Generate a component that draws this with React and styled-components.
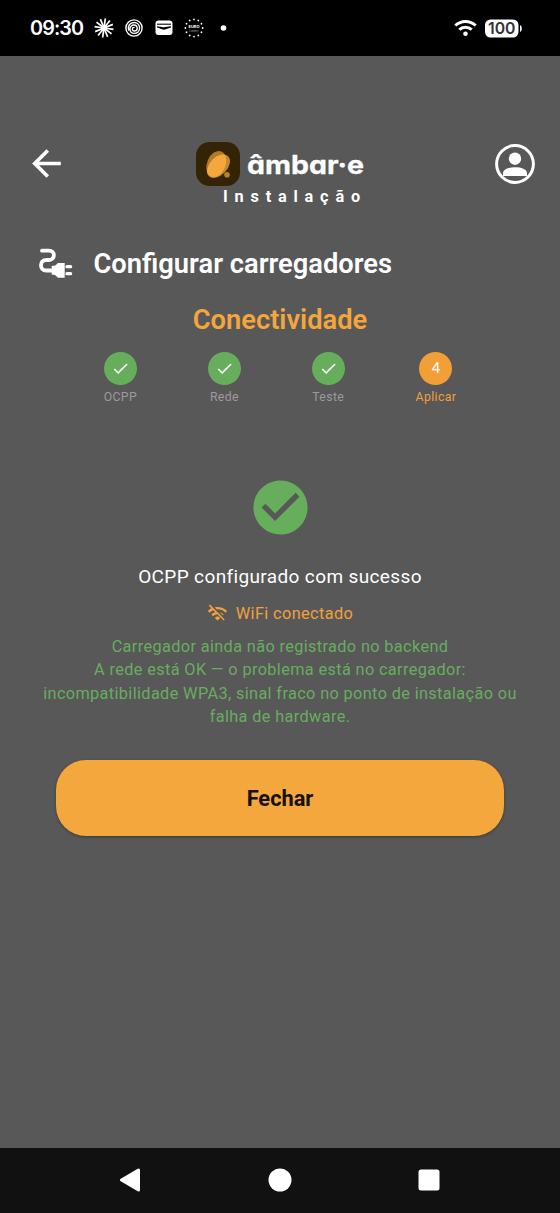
import React from 'react';
import styled, { createGlobalStyle } from 'styled-components';
import { MdArrowBack, MdCheck, MdCheckCircle, MdWifiOff } from 'react-icons/md';

const GlobalStyle = createGlobalStyle`
  * {
    box-sizing: border-box;
  }

  body {
    margin: 0;
    background: #585858;
    font-family: Roboto, "Liberation Sans", sans-serif;
  }

  svg {
    display: block;
    flex: none;
  }
`

const Screen = styled.div`
  display: flex;
  flex-direction: column;
  width: 560px;
  height: 1213px;
  background: #585858;
  color: #fff;
`

const StatusBar = styled.div`
  display: flex;
  align-items: center;
  justify-content: space-between;
  height: 56px;
  padding: 0 38px 0 30px;
  background: #000;
`

const StatusGroup = styled.div`
  display: flex;
  align-items: center;
  gap: ${props => props.$gap}px;
`

const Clock = styled.span`
  width: 54px;
  font-family: Inter, Roboto, sans-serif;
  font-size: 19.8px;
  font-weight: 600;
  letter-spacing: -0.9px;
  white-space: nowrap;
`

const Header = styled.header`
  display: flex;
  justify-content: space-between;
  height: 152px;
  padding: 86px 25px 0 25px;
`

const IconButton = styled.button`
  display: flex;
  align-items: flex-end;
  height: ${props => props.$height}px;
  padding: 0;
  border: none;
  background: none;
  color: #fff;
`

const Brand = styled.div`
  display: flex;
  flex-direction: column;
  width: 170px;
  margin-right: 1px;
`

const BrandSub = styled.div`
  padding-left: 27px;
  font-size: 16.3px;
  line-height: 21px;
  font-weight: 700;
  letter-spacing: 6.8px;
  white-space: nowrap;
`

const TitleRow = styled.div`
  display: flex;
  align-items: center;
  gap: 20.5px;
  height: 56px;
  margin-top: 27px;
  padding-left: 38px;
`

const Title = styled.h1`
  margin: 0;
  padding-top: 1px;
  font-size: 27.3px;
  font-weight: 600;
  line-height: 32px;
  white-space: nowrap;
`

const Subtitle = styled.h2`
  margin: 13px 0 16px;
  color: #f2a63b;
  font-size: 27.3px;
  font-weight: 600;
  line-height: 32px;
  text-align: center;
`

const Steps = styled.div`
  display: flex;
  justify-content: center;
  gap: 70.8px;
`

const Step = styled.div`
  display: flex;
  flex-direction: column;
  align-items: center;
  gap: 4px;
  color: ${props => props.$active ? '#f29f38' : '#9b9b9b'};
  font-size: 12.25px;
  line-height: 17px;
  letter-spacing: 0.4px;
`

const StepDot = styled.div`
  display: flex;
  align-items: center;
  justify-content: center;
  width: 33px;
  height: 33px;
  border-radius: 50%;
  background: ${props => props.$active ? '#f29f38' : '#66ae5b'};
  color: #fff;
  font-size: 15px;
  letter-spacing: 0;
`

const Result = styled.div`
  display: flex;
  flex-direction: column;
  align-items: center;
  padding-top: 69px;
`

const ResultTitle = styled.p`
  margin: 23px 0 0;
  font-size: 19px;
  line-height: 27px;
  letter-spacing: 0.37px;
`

const WifiRow = styled.div`
  display: flex;
  align-items: center;
  gap: 8px;
  height: 24px;
  margin-top: 11px;
  color: #f2a03c;
  font-size: 16.3px;
  letter-spacing: 0.4px;
`

const Message = styled.p`
  margin: 10px 0 0;
  color: #68ad5f;
  font-size: 16.3px;
  line-height: 23.3px;
  letter-spacing: 0.37px;
  text-align: center;
  white-space: pre-line;
`

const CloseButton = styled.button`
  width: 448px;
  height: 76px;
  margin: 32px auto 0;
  border: none;
  border-radius: 30px;
  background: #f3a73c;
  box-shadow: 0 1px 3px rgba(0, 0, 0, 0.35);
  color: #151005;
  font-family: inherit;
  font-size: 21.8px;
  font-weight: 700;
`

const NavBar = styled.nav`
  display: flex;
  align-items: center;
  justify-content: space-between;
  height: 65px;
  margin-top: auto;
  padding: 0 120px 1px 119px;
  background: #111;
`

const LogoText = styled.text`
  font-family: Inter, "Liberation Sans", sans-serif;
  font-size: 25.5px;
  font-weight: 700;
  font-feature-settings: "cv11";
`

const RAYS = [0, 30, 60, 90, 120, 150, 180, 210, 240, 270, 300, 330];

function BurstIcon() {
  return (
    <svg width="20" height="20" viewBox="0 0 20 20" stroke="#fff" strokeWidth="1.7">
      {RAYS.map(a => (
        <line key={a} x1="10" y1="10" x2="10" y2="0.4" transform={`rotate(${a + 8} 10 10)`} />
      ))}
      <circle cx="10" cy="10" r="3" fill="#fff" stroke="none" />
    </svg>
  )
}

function SpiralIcon() {
  return (
    <svg width="20" height="18" viewBox="-1 0 20 18" fill="none" stroke="#fff" strokeWidth="1.4" strokeLinecap="round">
      <circle cx="9" cy="9" r="8.1" />
      <path d="M3.6 11C2.4 7 5 3.5 9 3.5c3.4 0 5.6 2.5 5.6 5.6 0 3.1-2.3 5.3-5.2 5.3-2.7 0-4.5-1.9-4.5-4.4C4.9 7.7 6.7 6 8.9 6c2 0 3.3 1.4 3.3 3.2 0 1.7-1.2 2.8-2.8 2.8-1.3 0-2.1-.9-2.1-2 0-1 .7-1.600 1.700-1.600" />
    </svg>
  )
}

function WalletIcon() {
  return (
    <svg width="20" height="16" viewBox="-1 0 20 16">
      <rect x="0.5" y="0.5" width="17" height="14.5" rx="3" fill="#fff" />
      <path d="M2 4.2H16" stroke="#000" strokeWidth="1.1" />
      <path d="M2 6.3c3 .2 5 1.400 8 .8l6-.8v1.300l-6 2c-3 .8-5-1.600-8-2z" fill="#000" />
    </svg>
  )
}

function EuroIcon() {
  return (
    <svg width="20" height="20" viewBox="0 0 20 20" fill="#fff">
      {RAYS.map(a => (
        <circle key={a} cx="10" cy="1.4" r="0.9" transform={`rotate(${a} 10 10)`} />
      ))}
      <text x="10" y="10.3" fontSize="4" fontWeight="700" fontFamily="Inter, sans-serif" textAnchor="middle">EURO</text>
      <text x="10" y="13.5" fontSize="2.8" fontFamily="Inter, sans-serif" textAnchor="middle" opacity="0.6">Lottery</text>
    </svg>
  )
}

function WifiIcon() {
  return (
    <svg width="23" height="18" viewBox="0 0 23 18" fill="none" stroke="#fff" strokeWidth="3">
      <path d="M1.3 6.5C7.2 1 15.8 1 21.7 6.5" />
      <path d="M5.3 10.6c3.6-3.3 8.8-3.3 12.4 0" />
      <circle cx="11.5" cy="14.8" r="2.3" fill="#fff" stroke="none" />
    </svg>
  )
}

function BatteryIcon() {
  return (
    <svg width="37" height="19" viewBox="0 0 37 19">
      <rect x="0" y="0.5" width="33.5" height="18" rx="5.5" fill="#fff" />
      <path d="M35 6.2c1.3.4 1.7 1.1 1.7 3.3s-.4 2.9-1.7 3.3z" fill="#fff" />
      <text x="3" y="15.3" textLength="27.5" lengthAdjust="spacingAndGlyphs" fontSize="16.5" fontWeight="600" fontFamily="Inter, sans-serif" fill="#333">100</text>
    </svg>
  )
}

// two translucent seeds, brightest where they overlap
function Logo() {
  return (
    <svg width="170" height="44" viewBox="0 0 170 44">
      <defs>
        <clipPath id="seed">
          <ellipse cx="20.3" cy="22" rx="9.3" ry="13.6" transform="rotate(22 20.3 22)" />
        </clipPath>
      </defs>
      <rect x="0" y="0" width="44" height="44" rx="13.5" fill="#332406" />
      <ellipse cx="20.3" cy="22" rx="9.3" ry="13.6" transform="rotate(22 20.3 22)" fill="#b07a27" />
      <ellipse cx="22.5" cy="24.2" rx="8.8" ry="13.8" transform="rotate(44 22.5 24.2)" fill="#c48a30" />
      <g clipPath="url(#seed)">
        <ellipse cx="22.5" cy="24.2" rx="8.8" ry="13.8" transform="rotate(44 22.5 24.2)" fill="#f3a73c" />
      </g>
      <circle cx="31" cy="32.7" r="2.8" fill="#b98230" />
      <LogoText x="51" y="31.7" textLength="117" lengthAdjust="spacingAndGlyphs" fill="#fff" stroke="#fff" strokeWidth="0.3">âmbar·e</LogoText>
    </svg>
  )
}

function AccountIcon() {
  return (
    <svg width="40" height="40" viewBox="0 0 40 40" fill="#fff">
      <circle cx="20" cy="20" r="18.4" fill="none" stroke="#fff" strokeWidth="3" />
      <circle cx="20" cy="14.7" r="6.2" />
      <path d="M8 32v-2.5C8 25 14 23.3 20 23.3s12 1.7 12 6.2V32z" />
    </svg>
  )
}

function PlugIcon() {
  return (
    <svg width="35" height="32" viewBox="0 0 35 32">
      <path d="M4 3.7H11C17.5 3.7 17.5 13 11 13H8.3C1.2 13 1.2 23.5 8.3 23.5H15" fill="none" stroke="#fff" strokeWidth="3.8" strokeLinecap="round" />
      <path d="M13.7 19l3.6-.4L20 16h6.7v14.7H20L17 28l-3.3-.5z" fill="#fff" />
      <path d="M29 19.7h3.6M29 26.7h3.6" stroke="#fff" strokeWidth="3.3" strokeLinecap="round" />
    </svg>
  )
}

const steps = ['OCPP', 'Rede', 'Teste', 'Aplicar'];

function App() {
  return (
    <Screen>
      <GlobalStyle />
      <StatusBar>
        <StatusGroup $gap={10}>
          <Clock>09:30</Clock>
          <BurstIcon />
          <SpiralIcon />
          <WalletIcon />
          <EuroIcon />
          <svg width="20" height="6" viewBox="0 0 20 6"><circle cx="9.5" cy="3" r="2.8" fill="#fff" /></svg>
        </StatusGroup>
        <StatusGroup $gap={8}>
          <WifiIcon />
          <BatteryIcon />
        </StatusGroup>
      </StatusBar>

      <Header>
        <IconButton $height={43} aria-label="Voltar"><MdArrowBack size={43} /></IconButton>
        <Brand>
          <Logo />
          <BrandSub>Instalação</BrandSub>
        </Brand>
        <IconButton $height={42} aria-label="Perfil"><AccountIcon /></IconButton>
      </Header>

      <TitleRow>
        <PlugIcon />
        <Title>Configurar carregadores</Title>
      </TitleRow>
      <Subtitle>Conectividade</Subtitle>

      <Steps>
        {steps.map((label, i) => {
          const active = i === steps.length - 1;
          return (
            <Step key={label} $active={active}>
              <StepDot $active={active}>{active ? i + 1 : <MdCheck size={19} />}</StepDot>
              {label}
            </Step>
          )
        })}
      </Steps>

      <Result>
        <MdCheckCircle size={65} color="#66ae5b" />
        <ResultTitle>OCPP configurado com sucesso</ResultTitle>
        <WifiRow>
          <MdWifiOff size={21} />
          <span>WiFi conectado</span>
        </WifiRow>
        <Message>
          {'Carregador ainda não registrado no backend\nA rede está OK — o problema está no carregador:\nincompatibilidade WPA3, sinal fraco no ponto de instalação ou\nfalha de hardware.'}
        </Message>
      </Result>

      <CloseButton>Fechar</CloseButton>

      <NavBar>
        <svg width="22" height="24" viewBox="0 0 22 24"><path d="M2.5 12L19.5 2v20z" fill="#fff" stroke="#fff" strokeWidth="3" strokeLinejoin="round" /></svg>
        <svg width="24" height="24" viewBox="0 0 24 24"><circle cx="12" cy="12" r="11.5" fill="#fff" /></svg>
        <svg width="22" height="22" viewBox="0 0 22 22"><rect x="0.5" y="0.5" width="21" height="21" rx="2.5" fill="#fff" /></svg>
      </NavBar>
    </Screen>
  )
}

export default App;
